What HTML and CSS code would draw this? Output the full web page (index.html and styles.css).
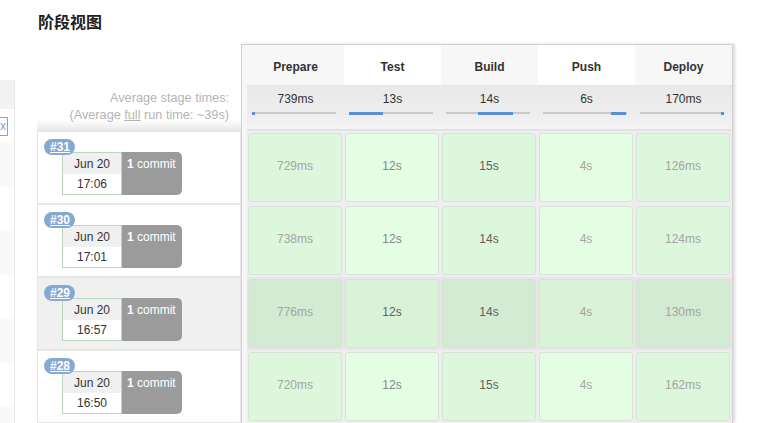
FILE: index.html
```html
<!DOCTYPE html>
<html lang="zh">
<head>
<meta charset="utf-8">
<title>阶段视图</title>
<link rel="stylesheet" href="styles.css">
</head>
<body>
<div class="page">
  <aside class="side">
    <div class="side-head"></div>
    <div class="side-first"><span class="side-box">x</span></div>
    <div class="side-row alt"></div>
    <div class="side-row"></div>
    <div class="side-row alt"></div>
    <div class="side-row"></div>
    <div class="side-row alt"></div>
    <div class="side-row"></div>
    <div class="side-row alt"></div>
  </aside>
  <main class="main">
    <h2 class="title">阶段视图</h2>
    <div class="view">
      <div class="builds">
        <div class="builds-head">
          <div>Average stage times:</div>
          <div>(Average <u>full</u> run time: ~39s)</div>
        </div>
        <div class="build">
          <span class="badge">#31</span>
          <div class="changeset">
            <div class="date"><div class="date-top">Jun 20</div><div class="date-bot">17:06</div></div>
            <div class="commits"><b>1</b> commit</div>
          </div>
        </div>
        <div class="build">
          <span class="badge">#30</span>
          <div class="changeset">
            <div class="date"><div class="date-top">Jun 20</div><div class="date-bot">17:01</div></div>
            <div class="commits"><b>1</b> commit</div>
          </div>
        </div>
        <div class="build hover">
          <span class="badge">#29</span>
          <div class="changeset">
            <div class="date"><div class="date-top">Jun 20</div><div class="date-bot">16:57</div></div>
            <div class="commits"><b>1</b> commit</div>
          </div>
        </div>
        <div class="build">
          <span class="badge">#28</span>
          <div class="changeset">
            <div class="date"><div class="date-top">Jun 20</div><div class="date-bot">16:50</div></div>
            <div class="commits"><b>1</b> commit</div>
          </div>
        </div>
      </div>
      <div class="stages">
        <div class="sh odd">Prepare</div>
        <div class="sh">Test</div>
        <div class="sh odd">Build</div>
        <div class="sh">Push</div>
        <div class="sh odd">Deploy</div>

        <div class="sa"><div class="avg-t">739ms</div><div class="bar"><span class="fill" style="left:0%;width:3%"></span></div></div>
        <div class="sa"><div class="avg-t">13s</div><div class="bar"><span class="fill" style="left:0%;width:40%"></span></div></div>
        <div class="sa"><div class="avg-t">14s</div><div class="bar"><span class="fill" style="left:38%;width:42%"></span></div></div>
        <div class="sa"><div class="avg-t">6s</div><div class="bar"><span class="fill" style="left:81%;width:18%"></span></div></div>
        <div class="sa"><div class="avg-t">170ms</div><div class="bar"><span class="fill" style="left:97%;width:3%"></span></div></div>

        <div class="sc odd"><div class="box t1">729ms</div></div>
        <div class="sc"><div class="box t2">12s</div></div>
        <div class="sc odd"><div class="box t3">15s</div></div>
        <div class="sc"><div class="box t1">4s</div></div>
        <div class="sc odd"><div class="box t1">126ms</div></div>

        <div class="sc odd"><div class="box t1">738ms</div></div>
        <div class="sc"><div class="box t2">12s</div></div>
        <div class="sc odd"><div class="box t3">14s</div></div>
        <div class="sc"><div class="box t1">4s</div></div>
        <div class="sc odd"><div class="box t1">124ms</div></div>

        <div class="sc odd hover"><div class="box t1">776ms</div></div>
        <div class="sc hover"><div class="box t3">12s</div></div>
        <div class="sc odd hover"><div class="box t3">14s</div></div>
        <div class="sc hover"><div class="box t1">4s</div></div>
        <div class="sc odd hover"><div class="box t1">130ms</div></div>

        <div class="sc odd"><div class="box t1">720ms</div></div>
        <div class="sc"><div class="box t2">12s</div></div>
        <div class="sc odd"><div class="box t3">15s</div></div>
        <div class="sc"><div class="box t1">4s</div></div>
        <div class="sc odd"><div class="box t1">162ms</div></div>
      </div>
    </div>
  </main>
</div>
</body>
</html>
```
FILE: styles.css
```css
html, body {
  margin: 0;
  padding: 0;
  background: #fff;
}
body {
  font-family: "Liberation Sans", Arial, sans-serif;
  font-size: 12px;
  color: #333;
  overflow: hidden;
}
.page {
  display: flex;
  align-items: flex-start;
  height: 423px;
}

/* left sidebar strip */
.side {
  width: 14px;
  flex: none;
  margin-top: 80px;
  border-right: 1px solid #e8e8e8;
  overflow: hidden;
  height: 343px;
}
.side-head {
  height: 29px;
  background: #f2f2f2;
}
.side-first {
  height: 34px;
  padding-top: 8px;
  box-sizing: border-box;
}
.side-box {
  display: block;
  margin-left: -14px;
  width: 19px;
  height: 17px;
  border: 1px solid #a0a0a0;
  color: #7aa6d6;
  font-size: 12px;
  line-height: 16px;
  text-align: right;
  padding-right: 1px;
  box-sizing: content-box;
}
.side-row {
  height: 44px;
}
.side-row.alt {
  background: #f9f9f9;
}

/* main */
.main {
  padding-left: 22px;
  flex: none;
}
.title {
  margin: 0;
  padding: 11px 0 0 1px;
  font-family: "Liberation Sans", "Noto Sans CJK SC", sans-serif;
  font-size: 16px;
  line-height: 24px;
  font-weight: bold;
  color: #222;
}
.view {
  display: flex;
  align-items: flex-start;
  margin-top: 9px;
}

/* builds column */
.builds {
  width: 204px;
  flex: none;
}
.builds-head {
  height: 87px;
  box-sizing: border-box;
  display: flex;
  flex-direction: column;
  justify-content: flex-end;
  align-items: flex-end;
  padding: 0 12px 7px 0;
  color: #b4b4b4;
  font-size: 12.7px;
  line-height: 17px;
  background: linear-gradient(to bottom, #fff 0, #fff 86%, #f4f4f4 93%, #e6e6e6 100%);
}
.builds-head u {
  text-decoration: underline;
}
.build {
  position: relative;
  height: 73px;
  box-sizing: border-box;
  border: 1px solid #e6e6e6;
  padding: 20px 0 0 24px;
}
.build.hover {
  background: #f0f0f0;
}
.badge {
  position: absolute;
  top: 7px;
  left: 6px;
  height: 16px;
  line-height: 17px;
  padding: 0 5px 0 6px;
  border-radius: 8px;
  background: #86a9d4;
  color: #fff;
  font-weight: bold;
  text-decoration: underline;
  z-index: 1;
}
.changeset {
  display: flex;
}
.date {
  width: 58px;
  border: 1px solid #b6d9be;
  text-align: center;
  color: #333;
}
.date-top {
  height: 21px;
  line-height: 22px;
  background: #f0f0f0;
}
.date-bot {
  height: 20px;
  line-height: 20px;
  background: #fff;
}
.commits {
  width: 60px;
  height: 43px;
  box-sizing: border-box;
  padding: 5px 0 0 5px;
  background: #9b9b9b;
  color: #fff;
  line-height: 15px;
  border-radius: 0 5px 5px 0;
}

/* stages table */
.stages {
  width: 492px;
  box-sizing: border-box;
  border: 1px solid #d2d2d2;
  border-bottom: none;
  box-shadow: 2px 0 3px rgba(0, 0, 0, 0.14);
  padding-left: 5px;
  background: #f6f6f6;
  display: grid;
  grid-template-columns: repeat(5, 97px);
}
.sh {
  height: 40px;
  box-sizing: border-box;
  padding-top: 2px;
  line-height: 40px;
  text-align: center;
  font-weight: bold;
  color: #333;
  background: #fff;
  border-bottom: 1px solid #e4e4e4;
  height: 41px;
}
.sh.odd {
  background: #f7f7f7;
}
.sa {
  box-sizing: border-box;
  padding-top: 6px;
  border-bottom: 2px solid #e2e2e2;
  height: 45px;
  text-align: center;
  background: linear-gradient(to bottom, #e9e9e9 0, #ededed 60%, #f3f3f3 100%);
}
.avg-t {
  line-height: 14px;
  color: #333;
}
.bar {
  position: relative;
  height: 2px;
  margin: 6px 8px 0 5px;
  background: #cacaca;
}
.fill {
  position: absolute;
  top: 0;
  height: 3px;
  background: #5b8fd2;
}
.sc {
  height: 73px;
  box-sizing: border-box;
  padding: 2px 2px 2px 1px;
  background: #eeeeee;
}
.sc.hover {
  background: #e6e6e6;
}
.box {
  height: 100%;
  box-sizing: border-box;
  border: 1px solid #d9e2d9;
  border-radius: 3px;
  display: flex;
  align-items: center;
  justify-content: center;
  padding-bottom: 4px;
  background: #e4fee4;
}
.sc.odd .box {
  background: #ddf7dd;
}
.sc.hover .box {
  background: #d9f3d9;
}
.sc.odd.hover .box {
  background: #d2ebd2;
}
.t1 {
  color: #a4a4a4;
}
.t2 {
  color: #878787;
}
.t3 {
  color: #5f5f5f;
}
```
